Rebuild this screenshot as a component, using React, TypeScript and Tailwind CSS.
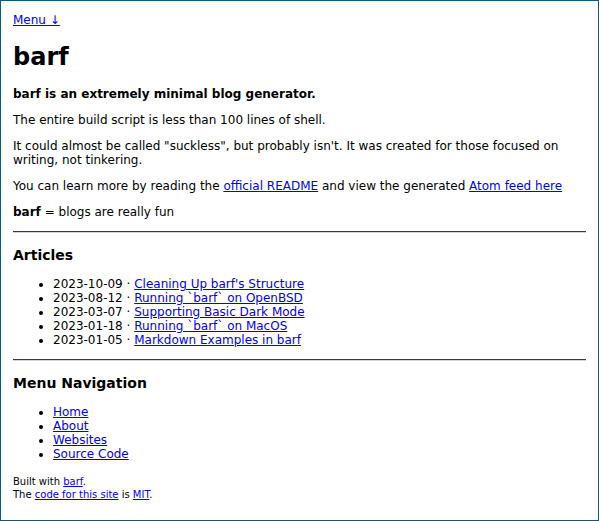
import React from "react";

const articles = [
  { date: "2023-10-09", title: "Cleaning Up barf's Structure" },
  { date: "2023-08-12", title: "Running `barf` on OpenBSD" },
  { date: "2023-03-07", title: "Supporting Basic Dark Mode" },
  { date: "2023-01-18", title: "Running `barf` on MacOS" },
  { date: "2023-01-05", title: "Markdown Examples in barf" },
];

const menu = ["Home", "About", "Websites", "Source Code"];

const A = ({ children }: { children: React.ReactNode }) => (
  <a href="#" className="text-[#0000ee] underline">
    {children}
  </a>
);

const Rule = () => (
  <hr className="h-0 my-[6px] border-t border-b border-t-[#3a3a3a] border-b-[#d4d4d4]" />
);

export default function App() {
  return (
    <div className="w-[599px] h-[521px] overflow-hidden border border-[#035c7c] bg-white px-3 pt-3 text-[12px] leading-[14px] text-black font-['DejaVu_Sans',sans-serif]">
      <A>Menu ↓</A>

      <h1 className="text-[24px] leading-[28px] font-bold my-4">barf</h1>

      <p className="font-bold my-3">barf is an extremely minimal blog generator.</p>
      <p className="my-3">The entire build script is less than 100 lines of shell.</p>
      <p className="my-3">
        It could almost be called "suckless", but probably isn't. It was created
        for those focused on writing, not tinkering.
      </p>
      <p className="my-3">
        You can learn more by reading the <A>official README</A> and view the
        generated <A>Atom feed here</A>
      </p>
      <p className="mt-3 mb-3">
        <strong>barf</strong> = blogs are really fun
      </p>

      <Rule />

      <h3 className="text-[14px] leading-[16px] font-bold mt-[14px] mb-[14px]">Articles</h3>
      <ul className="list-disc pl-10 my-3">
        {articles.map((a) => (
          <li key={a.date}>
            {a.date} · <A>{a.title}</A>
          </li>
        ))}
      </ul>

      <Rule />

      <h3 className="text-[14px] leading-[16px] font-bold mt-[14px] mb-[14px]">Menu Navigation</h3>
      <ul className="list-disc pl-10 my-3">
        {menu.map((m) => (
          <li key={m}>
            <A>{m}</A>
          </li>
        ))}
      </ul>

      <footer className="mt-[14px] text-[10px] leading-[13px]">
        Built with <A>barf</A>.
        <br />
        The <A>code for this site</A> is <A>MIT</A>.
      </footer>
    </div>
  );
}
